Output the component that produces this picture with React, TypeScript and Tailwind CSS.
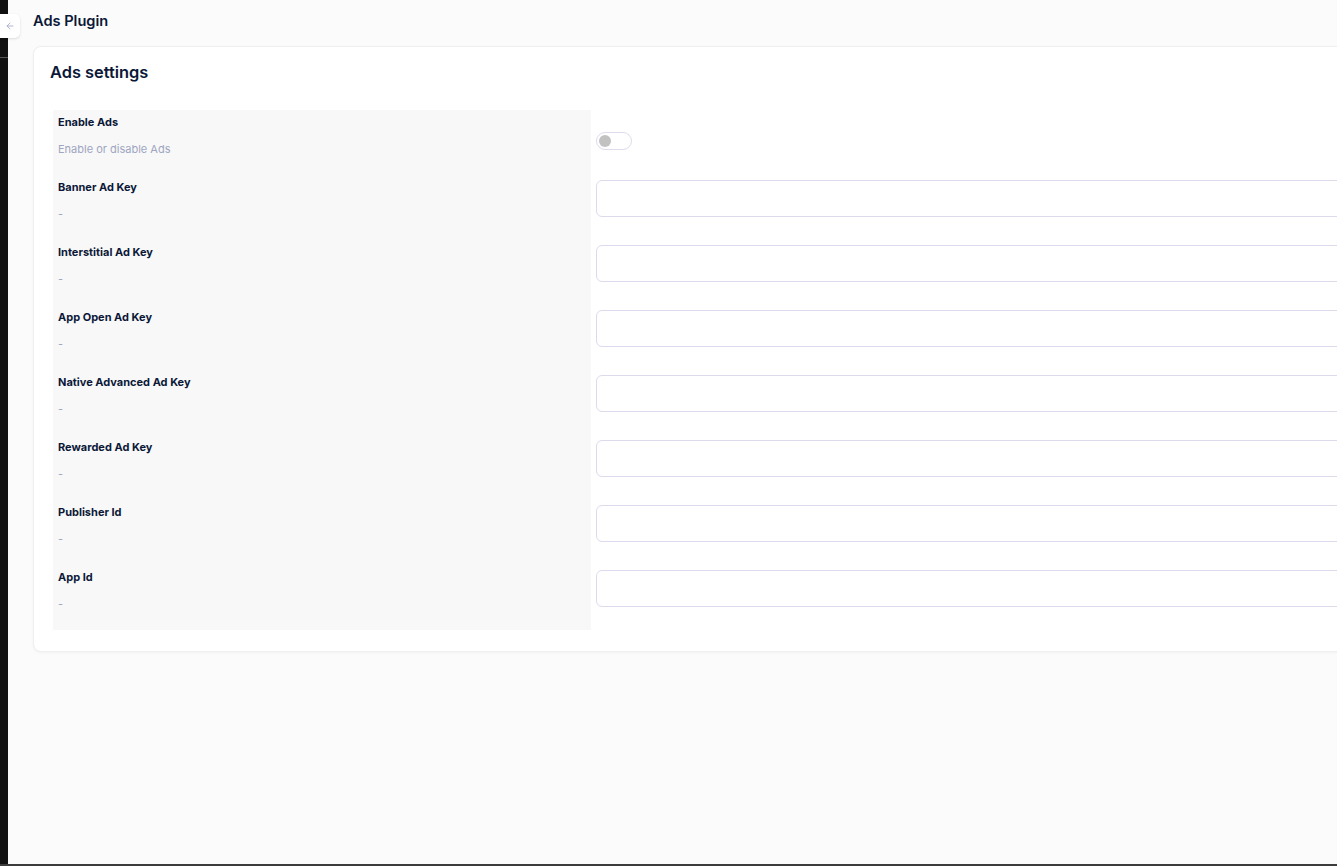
import { ArrowLeft } from "lucide-react";

const fields = [
  { label: "Banner Ad Key" },
  { label: "Interstitial Ad Key" },
  { label: "App Open Ad Key" },
  { label: "Native Advanced Ad Key" },
  { label: "Rewarded Ad Key" },
  { label: "Publisher Id" },
  { label: "App Id" },
];

function LabelCell({ title, desc }: { title: string; desc: string }) {
  return (
    <div className="w-[538px] shrink-0 bg-[#f8f8f8] px-[5px] pt-[4px] h-[65px]">
      <div className="text-[11px] leading-[16px] font-bold text-[#0c1838]">{title}</div>
      <div className="mt-[11px] text-[11px] leading-[16px] text-[#9ea6c0]">{desc}</div>
    </div>
  );
}

export default function App() {
  return (
    <div
      className="relative flex h-[866px] w-[1337px] overflow-hidden bg-[#fbfbfb]"
      style={{ fontFamily: "Inter, 'Noto Sans', sans-serif" }}
    >
      <div className="w-[8px] shrink-0 bg-[#111111] flex flex-col">
        <div className="h-[58px] border-b border-[#555]" />
      </div>

      <button className="absolute left-0 top-[14px] flex h-[24px] w-[20px] items-center justify-center rounded-r-[5px] bg-white shadow-sm">
        <ArrowLeft className="h-[10px] w-[10px] text-[#a4a7c8]" strokeWidth={2} />
      </button>

      <main className="flex-1 flex flex-col pl-[25px]">
        <h1 className="h-[46px] pt-[10px] text-[14.6px] leading-[22px] font-semibold text-[#0c1838]">
          Ads Plugin
        </h1>

        <section className="w-[1400px] rounded-[8px] border border-[#efefef] bg-white px-[16px] pt-[13px] pb-[21px] shadow-[0_1px_3px_rgba(0,0,0,0.04)]">
          <h2 className="text-[16.4px] leading-[24px] font-semibold text-[#0c1838]">Ads settings</h2>

          <div className="mt-[26px] ml-[3px] flex flex-col">
            <div className="flex gap-[5px]">
              <LabelCell title="Enable Ads" desc="Enable or disable Ads" />
              <div className="pt-[22px]">
                <div className="flex h-[18px] w-[36px] items-center rounded-full border border-[#dedcec] bg-white px-[2px]">
                  <div className="h-[12px] w-[12px] rounded-full bg-[#c2c2c2]" />
                </div>
              </div>
            </div>

            {fields.map((f) => (
              <div key={f.label} className="flex gap-[5px]">
                <LabelCell title={f.label} desc="-" />
                <div className="flex-1 pt-[5px]">
                  <input
                    type="text"
                    className="h-[37px] w-full rounded-[6px] border border-[#dcdbed] bg-white px-3 text-sm outline-none"
                  />
                </div>
              </div>
            ))}
          </div>
        </section>
      </main>

      <div className="absolute bottom-0 left-0 h-[2px] w-full bg-[#3c3c3c]" />
    </div>
  );
}
